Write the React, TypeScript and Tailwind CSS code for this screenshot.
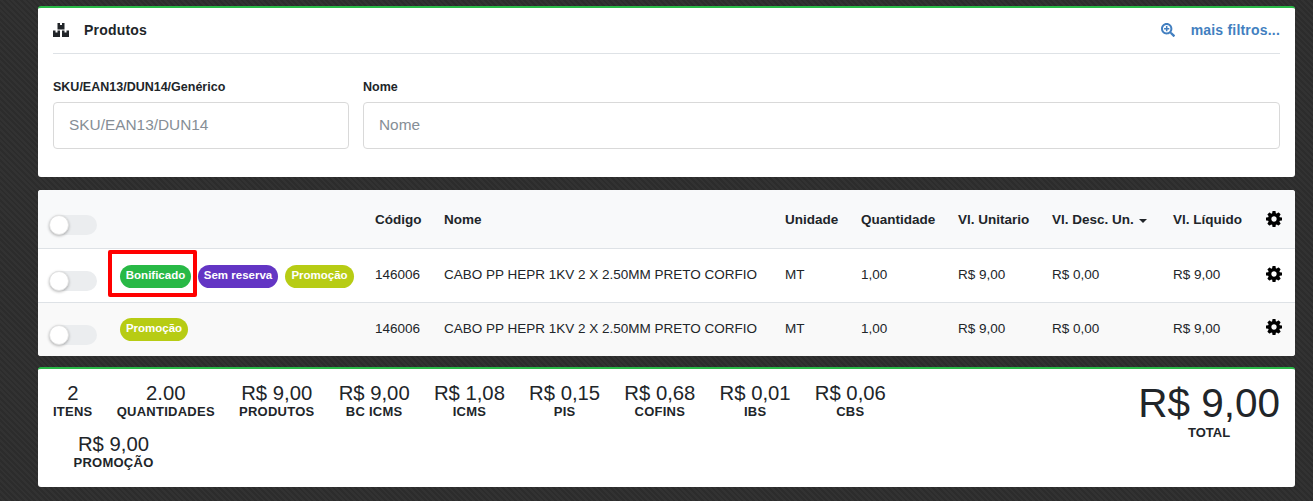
import React from "react";
import { FaSearchPlus } from "react-icons/fa";

type Badge = { label: string; color: string };

type Row = {
  id: number;
  badges: Badge[];
  rowClass: string;
  badgeOffset: string;
  gearOffset: string;
};

const rows: Row[] = [
  {
    id: 1,
    rowClass: "h-[54px] border-b border-[#dee2e6] bg-white",
    badgeOffset: "mt-[2px]",
    gearOffset: "mb-[3px]",
    badges: [
      { label: "Bonificado", color: "bg-[#28b946] w-[71px]" },
      { label: "Sem reserva", color: "bg-[#6335c4] w-[80px]" },
      { label: "Promoção", color: "bg-[#b7cc14] w-[69px]" },
    ],
  },
  {
    id: 2,
    rowClass: "h-[53px] bg-[#f9f9f9]",
    badgeOffset: "mt-0",
    gearOffset: "mb-[5px]",
    badges: [{ label: "Promoção", color: "bg-[#b7cc14] w-[68px]" }],
  },
];

const stats = [
  { value: "2", label: "ITENS" },
  { value: "2.00", label: "QUANTIDADES" },
  { value: "R$ 9,00", label: "PRODUTOS" },
  { value: "R$ 9,00", label: "BC ICMS" },
  { value: "R$ 1,08", label: "ICMS" },
  { value: "R$ 0,15", label: "PIS" },
  { value: "R$ 0,68", label: "COFINS" },
  { value: "R$ 0,01", label: "IBS" },
  { value: "R$ 0,06", label: "CBS" },
];

const gridCols =
  "grid grid-cols-[71px_255px_69px_341px_76px_97px_94px_121px_93px_29px] items-center pl-[11px]";

const Toggle = () => (
  <div className="relative h-[20px] w-[48px] rounded-full bg-[#ebedef]">
    <div className="absolute left-0 top-0 h-[20px] w-[20px] rounded-full border border-[#e2e2e2] bg-white shadow-[0_1px_3px_rgba(0,0,0,0.3)]" />
  </div>
);

const CubesIcon = () => (
  <svg viewBox="0 0 16 14" className="h-[14px] w-[16px] fill-[#212529]">
    <path d="M4.5 0H7v2h2V0h2.500v6.500h-7z" />
    <path d="M0 7.500h2.500v2h2v-2H7V14H0z" />
    <path d="M9 7.500h2.500v2h2v-2H16V14H9z" />
  </svg>
);

const GearIcon = ({ className = "" }: { className?: string }) => (
  <svg viewBox="128 128 1536 1536" className={`h-[16px] w-[16px] fill-black ${className}`}>
    <path d="M1152 896q0-106-75-181t-181-75-181 75-75 181 75 181 181 75 181-75 75-181zm512-109v222q0 12-8 23t-20 13l-185 28q-19 54-39 91 35 50 107 138 10 12 10 25t-9 23q-27 37-99 108t-94 71q-12 0-26-9l-138-108q-44 23-91 38-16 136-29 186-7 28-36 28h-222q-14 0-24.500-8.500t-11.500-21.500l-28-184q-49-16-90-37l-141 107q-10 9-25 9-14 0-25-11-126-114-165-168-7-10-7-23 0-12 8-23 15-21 51-66.500t54-70.500q-27-50-41-99l-183-27q-13-2-21-12.500t-8-23.500v-222q0-12 8-23t19-13l186-28q14-46 39-92-40-57-107-138-10-12-10-24 0-10 9-23 26-36 98.500-107.500t94.500-71.500q13 0 26 10l138 107q44-23 91-38 16-136 29-186 7-28 36-28h222q14 0 24.500 8.500t11.500 21.500l28 184q49 16 90 37l142-107q9-9 24-9 13 0 25 10 129 119 165 170 7 8 7 22 0 12-8 23-15 21-51 66.500t-54 70.500q26 50 41 98l183 28q13 2 21 12.500t8 23.500z" />
  </svg>
);

const Stat = ({ value, label, className = "" }: { value: string; label: string; className?: string }) => (
  <div className={`flex flex-col items-center ${className}`}>
    <span className="text-[20.3px] leading-[21px]">{value}</span>
    <span className="text-[13px] font-bold leading-[16px] tracking-[0.25px]">{label}</span>
  </div>
);

const App: React.FC = () => {
  return (
    <div className="h-[501px] w-[1313px] overflow-hidden bg-[repeating-linear-gradient(45deg,#2c2c2c_0px,#2c2c2c_2px,#323232_2px,#323232_4px)] pl-[38px] pr-[18px] pt-[6px] font-['Liberation_Sans',Arial,sans-serif] text-[#212529]">
      {/* filtros */}
      <div className="h-[171px] rounded-[3px] border-t-2 border-[#28b946] bg-white px-[15px]">
        <div className="flex h-[46px] items-center justify-between border-b border-[#dee2e6] pb-[1px]">
          <div className="flex items-center">
            <CubesIcon />
            <span className="ml-[15px] text-[14px] font-bold tracking-[0.2px]">Produtos</span>
          </div>
          <div className="flex items-center text-[#427fc0]">
            <FaSearchPlus className="h-[14px] w-[14px]" />
            <span className="ml-[16px] text-[14px] font-bold tracking-[0.2px]">mais filtros...</span>
          </div>
        </div>
        <div className="mt-[25px] flex gap-[14px]">
          <div className="w-[296px]">
            <label className="block text-[12.5px] font-bold leading-[16px]">SKU/EAN13/DUN14/Genérico</label>
            <input
              placeholder="SKU/EAN13/DUN14"
              className="mt-[7px] h-[47px] w-full rounded-[4px] border border-[#d9d9d9] px-[15px] pb-[2px] text-[15.4px] placeholder:text-[#868e96]"
            />
          </div>
          <div className="flex-1">
            <label className="block text-[12.5px] font-bold leading-[16px]">Nome</label>
            <input
              placeholder="Nome"
              className="mt-[7px] h-[47px] w-full rounded-[4px] border border-[#d9d9d9] px-[15px] pb-[2px] text-[15.4px] placeholder:text-[#868e96]"
            />
          </div>
        </div>
      </div>

      {/* tabela */}
      <div className="relative mt-[13px] overflow-hidden rounded-[3px] bg-white text-[13.5px]">
        <div className={`${gridCols} h-[59px] border-b border-[#dee2e6] bg-[#f8f9fa] pt-[2px] font-bold`}>
          <div className="pt-[10px]">
            <Toggle />
          </div>
          <div />
          <div>Código</div>
          <div>Nome</div>
          <div>Unidade</div>
          <div>Quantidade</div>
          <div>Vl. Unitario</div>
          <div className="flex items-center">
            Vl. Desc. Un.
            <span className="ml-[5px] mt-[1px] h-0 w-0 border-x-[4px] border-t-[4px] border-x-transparent border-t-[#212529]" />
          </div>
          <div>Vl. Líquido</div>
          <GearIcon className="mb-[3px]" />
        </div>

        {rows.map((row) => (
          <div key={row.id} className={`${gridCols} ${row.rowClass} pb-[1px]`}>
            <div className="pt-[11px]">
              <Toggle />
            </div>
            <div className={`${row.badgeOffset} flex gap-[7px]`}>
              {row.badges.map((badge) => (
                <span
                  key={badge.label}
                  className={`flex h-[23px] items-center justify-center rounded-full pb-[1px] text-[11.5px] font-bold text-white ${badge.color}`}
                >
                  {badge.label}
                </span>
              ))}
            </div>
            <div>146006</div>
            <div>CABO PP HEPR 1KV 2 X 2.50MM PRETO CORFIO</div>
            <div>MT</div>
            <div>1,00</div>
            <div>R$ 9,00</div>
            <div>R$ 0,00</div>
            <div>R$ 9,00</div>
            <GearIcon className={row.gearOffset} />
          </div>
        ))}

        {/* marcação em vermelho por cima do selo */}
        <div className="absolute left-[70px] top-[60px] h-[47px] w-[89px] rounded-[2px] border-[4px] border-[#ff0000]" />
      </div>

      {/* totais */}
      <div className="mt-[11px] flex h-[120px] justify-between rounded-[3px] border-t-2 border-[#28b946] bg-white px-[15px]">
        <div className="flex w-[860px] flex-wrap content-start gap-x-[24.2px] gap-y-[14px] pt-[14px]">
          {stats.map((stat) => (
            <Stat key={stat.label} value={stat.value} label={stat.label} />
          ))}
          <Stat value="R$ 9,00" label="PROMOÇÃO" className="ml-[20.5px]" />
        </div>
        <div className="flex flex-col items-center pt-[11px]">
          <span className="text-[40.5px] leading-[46px]">R$ 9,00</span>
          <span className="text-[13px] font-bold leading-[14px]">TOTAL</span>
        </div>
      </div>
    </div>
  );
};

export default App;
